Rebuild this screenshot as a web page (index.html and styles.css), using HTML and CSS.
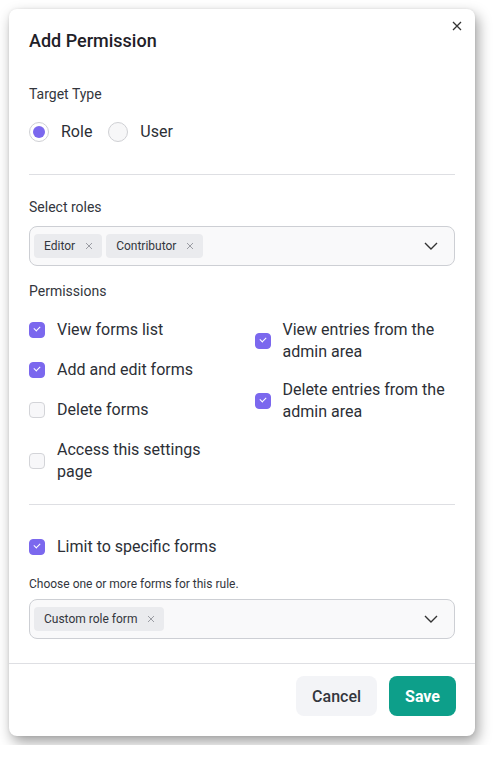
FILE: index.html
```html
<!DOCTYPE html>
<html lang="en">
<head>
  <meta charset="UTF-8">
  <title>Add Permission</title>
  <link rel="stylesheet" href="styles.css">
</head>
<body>

  <div class="modal">
    <button class="close" aria-label="Close">
      <svg width="10" height="10" viewBox="0 0 10 10"><path d="M1 1L9 9M9 1L1 9" stroke="#333" stroke-width="1.3" fill="none"/></svg>
    </button>

    <h1 class="title">Add Permission</h1>

    <div class="body">
      <section class="section">
        <div class="label">Target Type</div>
        <div class="radios">
          <label class="radio"><span class="dot on"></span>Role</label>
          <label class="radio"><span class="dot"></span>User</label>
        </div>
      </section>

      <section class="section">
        <div class="label">Select roles</div>
        <div class="select">
          <span class="tag">Editor <svg class="x" width="8" height="8" viewBox="0 0 8 8"><path d="M1 1L7 7M7 1L1 7" stroke="#9a9ca3" stroke-width="1" fill="none"/></svg></span>
          <span class="tag">Contributor <svg class="x" width="8" height="8" viewBox="0 0 8 8"><path d="M1 1L7 7M7 1L1 7" stroke="#9a9ca3" stroke-width="1" fill="none"/></svg></span>
          <svg class="chev" width="14" height="8" viewBox="0 0 14 8"><path d="M1 1L7 7L13 1" stroke="#333" stroke-width="1.4" fill="none"/></svg>
        </div>

        <div class="label perms-label">Permissions</div>
        <div class="perms">
          <div class="col">
            <label class="check"><span class="box on"></span>View forms list</label>
            <label class="check"><span class="box on"></span>Add and edit forms</label>
            <label class="check"><span class="box"></span>Delete forms</label>
            <label class="check"><span class="box"></span>Access this settings page</label>
          </div>
          <div class="col col-right">
            <label class="check"><span class="box on"></span>View entries from the admin area</label>
            <label class="check"><span class="box on"></span>Delete entries from the admin area</label>
          </div>
        </div>
      </section>

      <section class="section last">
        <label class="check"><span class="box on"></span>Limit to specific forms</label>
        <div class="hint">Choose one or more forms for this rule.</div>
        <div class="select">
          <span class="tag">Custom role form <svg class="x" width="8" height="8" viewBox="0 0 8 8"><path d="M1 1L7 7M7 1L1 7" stroke="#9a9ca3" stroke-width="1" fill="none"/></svg></span>
          <svg class="chev" width="14" height="8" viewBox="0 0 14 8"><path d="M1 1L7 7L13 1" stroke="#333" stroke-width="1.4" fill="none"/></svg>
        </div>
      </section>
    </div>

    <div class="footer">
      <button class="btn cancel">Cancel</button>
      <button class="btn save">Save</button>
    </div>
  </div>

</body>
</html>
```

FILE: styles.css
```css
body {
  margin: 0;
  background: #fff;
  font-family: Roboto, "Liberation Sans", sans-serif;
  color: #2c2f36;
}

.modal {
  position: relative;
  width: 466px;
  margin: 9px;
  background: #fff;
  border-radius: 8px;
  box-shadow: 3px 6px 14px rgba(0, 0, 0, 0.38), 0 0 3px rgba(0, 0, 0, 0.08);
}

.close {
  position: absolute;
  top: 11px;
  right: 12px;
  width: 12px;
  height: 12px;
  padding: 0;
  border: none;
  background: none;
  display: flex;
  align-items: center;
  justify-content: center;
}

.title {
  margin: 0;
  padding: 20px 20px 0;
  font-size: 18px;
  line-height: 24px;
  font-weight: 500;
  color: #1f2128;
}

.body {
  padding: 31px 20px 0;
}

.section {
  padding-bottom: 32px;
  border-bottom: 1px solid #dedfe3;
  margin-bottom: 22px;
}

.section.last {
  border-bottom: none;
  margin-bottom: 0;
  padding-top: 9px;
  padding-bottom: 24px;
}

.section + .section:not(.last) {
  padding-bottom: 21px;
}

.label {
  font-size: 14px;
  line-height: 20px;
  color: #33363d;
}

.radios {
  display: flex;
  gap: 16px;
  margin-top: 18px;
}

.radio {
  display: flex;
  align-items: center;
  gap: 12px;
  font-size: 16px;
  line-height: 20px;
}

.dot {
  width: 18px;
  height: 18px;
  border-radius: 50%;
  border: 1px solid #cfd0d4;
  background: #f7f7f8;
  position: relative;
}

.dot.on {
  background: #fff;
}

.dot.on::after {
  content: "";
  position: absolute;
  left: 3px;
  top: 3px;
  width: 12px;
  height: 12px;
  border-radius: 50%;
  background: #7b68ee;
}

.select {
  display: flex;
  align-items: center;
  gap: 4px;
  margin-top: 9px;
  height: 38px;
  padding: 0 16px 0 4px;
  border: 1px solid #cdcfd4;
  border-radius: 8px;
  background: #f9f9fa;
}

.tag {
  display: flex;
  align-items: center;
  gap: 10px;
  height: 24px;
  padding: 0 9px 0 10px;
  border-radius: 4px;
  background: #eaebee;
  font-size: 12px;
  color: #33363d;
}

.chev {
  margin-left: auto;
}

.perms-label {
  margin-top: 15px;
}

.perms {
  display: grid;
  grid-template-columns: 1fr 1fr;
  column-gap: 25px;
  margin-top: 18px;
}

.col {
  display: flex;
  flex-direction: column;
  gap: 18px;
}

.col-right {
  gap: 16px;
}

.check {
  display: flex;
  align-items: center;
  gap: 12px;
  font-size: 16px;
  line-height: 22px;
}

.box {
  flex: none;
  width: 14px;
  height: 14px;
  border: 1px solid #d3d4d8;
  border-radius: 4px;
  background: #f7f7f9;
  position: relative;
}

.box.on {
  border-color: #7b68ee;
  background: #7b68ee;
}

.box.on::after {
  content: "";
  position: absolute;
  left: 4px;
  top: 3px;
  width: 5px;
  height: 3px;
  border-left: 1px solid #fff;
  border-bottom: 1px solid #fff;
  transform: rotate(-45deg);
}

.hint {
  margin-top: 18px;
  font-size: 12px;
  line-height: 16px;
  color: #33363d;
}

.hint + .select {
  margin-top: 7px;
}

.footer {
  display: flex;
  justify-content: flex-end;
  gap: 12px;
  padding: 12px 19px 20px;
  border-top: 1px solid #dedfe3;
}

.btn {
  height: 40px;
  padding: 0 16px;
  border: none;
  border-radius: 8px;
  font-family: inherit;
  font-size: 16px;
}

.cancel {
  background: #f3f4f7;
  color: #33363d;
  font-weight: 500;
}

.save {
  background: #0d9f8a;
  color: #fff;
  font-weight: 700;
}
```
